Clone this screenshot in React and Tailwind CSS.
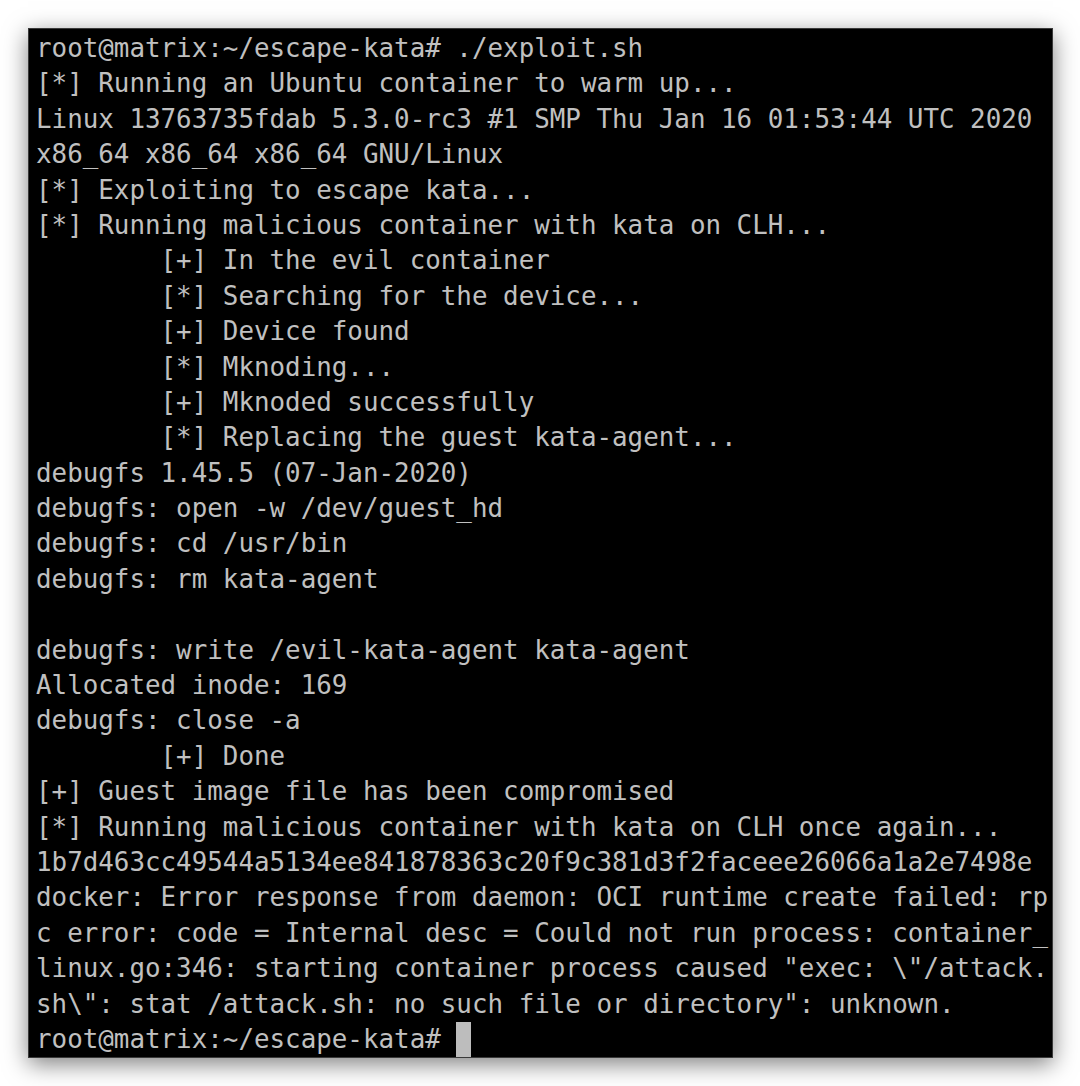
const lines = [
  "root@matrix:~/escape-kata# ./exploit.sh",
  "[*] Running an Ubuntu container to warm up...",
  "Linux 13763735fdab 5.3.0-rc3 #1 SMP Thu Jan 16 01:53:44 UTC 2020",
  "x86_64 x86_64 x86_64 GNU/Linux",
  "[*] Exploiting to escape kata...",
  "[*] Running malicious container with kata on CLH...",
  "        [+] In the evil container",
  "        [*] Searching for the device...",
  "        [+] Device found",
  "        [*] Mknoding...",
  "        [+] Mknoded successfully",
  "        [*] Replacing the guest kata-agent...",
  "debugfs 1.45.5 (07-Jan-2020)",
  "debugfs: open -w /dev/guest_hd",
  "debugfs: cd /usr/bin",
  "debugfs: rm kata-agent",
  "",
  "debugfs: write /evil-kata-agent kata-agent",
  "Allocated inode: 169",
  "debugfs: close -a",
  "        [+] Done",
  "[+] Guest image file has been compromised",
  "[*] Running malicious container with kata on CLH once again...",
  "1b7d463cc49544a5134ee841878363c20f9c381d3f2faceee26066a1a2e7498e",
  "docker: Error response from daemon: OCI runtime create failed: rp",
  "c error: code = Internal desc = Could not run process: container_",
  'linux.go:346: starting container process caused "exec: \\"/attack.',
  'sh\\": stat /attack.sh: no such file or directory": unknown.',
];

export default function App() {
  return (
    <div className="min-h-[1086px] w-[1080px] bg-white p-[28px]">
      <div
        className="h-[1030px] w-[1025px] overflow-hidden border border-[#3a3a3a] bg-black pl-[7px] pt-[2px] text-[25.86px] leading-[35.46px] text-[#c0c0c0] shadow-[0_6px_22px_rgba(0,0,0,0.5)]"
        style={{ fontFamily: '"DejaVu Sans Mono", "Liberation Mono", monospace' }}
      >
        {lines.map((line, i) => (
          <div key={i} className="h-[35.4px] whitespace-pre">
            {line}
          </div>
        ))}
        <div className="flex h-[35.4px] items-stretch whitespace-pre">
          <span>root@matrix:~/escape-kata# </span>
          <span className="w-[15px] bg-[#bdbdbd]" />
        </div>
      </div>
    </div>
  );
}
